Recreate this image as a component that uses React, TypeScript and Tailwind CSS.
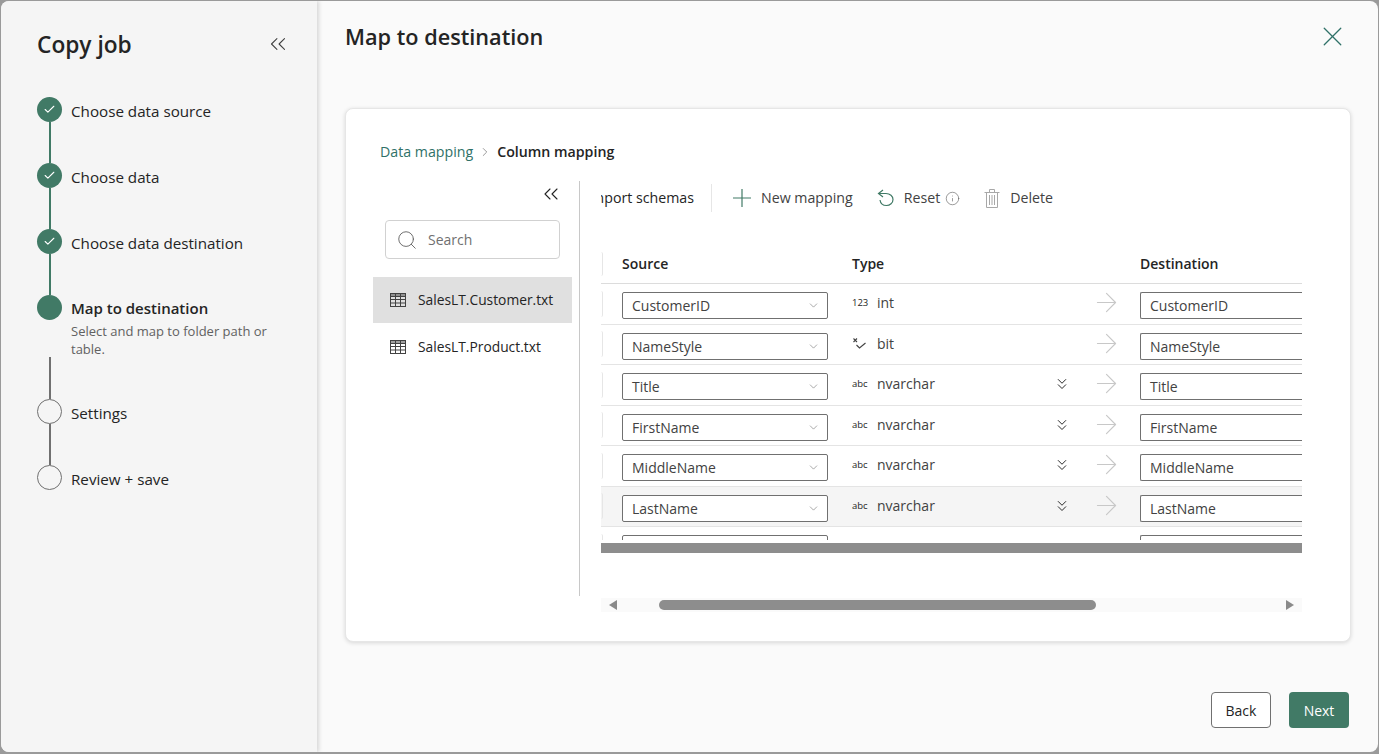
import { ArrowRight, ChevronDown, ChevronRight, ChevronsDown, ChevronsLeft, Check, Info, Search, X } from 'lucide-react';

const steps = [
  { label: 'Choose data source', state: 'done' },
  { label: 'Choose data', state: 'done' },
  { label: 'Choose data destination', state: 'done' },
  { label: 'Map to destination', state: 'active', note: 'Select and map to folder path or table.' },
  { label: 'Settings', state: 'todo' },
  { label: 'Review + save', state: 'todo' }
];

const rows = [
  { name: 'CustomerID', icon: '123', type: 'int' },
  { name: 'NameStyle', icon: 'bit', type: 'bit' },
  { name: 'Title', icon: 'abc', type: 'nvarchar' },
  { name: 'FirstName', icon: 'abc', type: 'nvarchar' },
  { name: 'MiddleName', icon: 'abc', type: 'nvarchar' },
  { name: 'LastName', icon: 'abc', type: 'nvarchar', hover: true },
  { name: '', icon: '', type: '' }
];

function TableIcon() {
  return (
    <svg width="16" height="14" viewBox="0 0 16 14" fill="none" stroke="#424242" strokeWidth="1">
      <rect x="0.5" y="0.5" width="15" height="13" />
      <path d="M0.5 3.5H15.5M0.5 6.5H15.5M0.5 10H15.5M5.5 0.5V13.5M10.5 0.5V13.5" />
      <path d="M0.5 2H15.5" />
    </svg>
  );
}

function PlusIcon() {
  return (
    <svg width="18" height="18" viewBox="0 0 18 18" fill="none" stroke="#417a66" strokeWidth="1.2">
      <path d="M9 0V18M0 9H18" />
    </svg>
  );
}

function ResetIcon() {
  return (
    <svg width="19" height="18" viewBox="0 0 19 18" fill="none" stroke="#417a66" strokeWidth="1.2">
      <path d="M6 1L1.5 4.5L6 8" />
      <path d="M1.5 4.5H9C13 4.5 16 7 16 10.5C16 14 13 16.5 9.5 16.5C6 16.5 3.5 14.5 3 11" />
    </svg>
  );
}

function TrashIcon() {
  return (
    <svg width="16" height="19" viewBox="0 0 16 19" fill="none" stroke="#a8a8a8" strokeWidth="1">
      <path d="M0.5 3.5H15.5M5.5 3.5V0.5H10.5V3.5" />
      <path d="M2.5 3.5V18.5H13.5V3.5" />
      <path d="M5.5 6V16M8 6V16M10.5 6V16" />
    </svg>
  );
}

function Step({ step, last }: { step: (typeof steps)[number]; last: boolean }) {
  const done = step.state === 'done';
  const active = step.state === 'active';
  const lineColor = done ? 'bg-[#417a66]' : 'bg-[#707070]';
  return (
    <div className={`flex gap-[9px] ${active ? 'h-[104px]' : 'h-[66px]'}`}>
      <div className="flex w-[25px] flex-col items-center">
        {step.state === 'todo' ? (
          <div className="h-[25px] w-[25px] shrink-0 rounded-full border border-[#707070]" />
        ) : (
          <div className="flex h-[25px] w-[25px] shrink-0 items-center justify-center rounded-full bg-[#417a66]">
            {done && <Check size={13} color="#fff" strokeWidth={2} />}
          </div>
        )}
        {!last && <div className={`w-[2px] flex-1 ${lineColor} ${active ? 'mt-[37px]' : ''}`} />}
      </div>
      <div className={`w-[205px] ${active ? '' : 'mt-[1px]'}`}>
        <div className={`leading-[26px] text-[#242424] ${active ? 'text-[15px] font-semibold' : 'text-[15.2px]'}`}>
          {step.label}
        </div>
        {step.note && <div className="mt-[1px] text-[13px] leading-[18px] text-[#616161]">{step.note}</div>}
      </div>
    </div>
  );
}

function TypeIcon({ kind }: { kind: string }) {
  if (kind === 'bit') {
    return (
      <svg width="15" height="14" viewBox="0 0 15 14" fill="none" stroke="#424242" strokeWidth="1.1">
        <path d="M1.5 1.5L5 5M5 1.5L1.5 5M4.5 8L7.5 11L13.5 6" />
      </svg>
    );
  }
  return <span className="w-[17px] text-[9.5px] leading-none text-[#242424]">{kind}</span>;
}

function Row({ row }: { row: (typeof rows)[number] }) {
  return (
    <div className={`grid h-[40.5px] shrink-0 grid-cols-[21px_230px_245px_43px_162px] border-b border-[#e4e4e4] ${row.hover ? 'bg-[#f5f5f5]' : ''}`}>
      <div className="flex items-center">
        <div className="h-[26px] w-[2px] rounded-r-sm border-r border-[#e6e6e6]" />
      </div>
      <div className="pt-[8px]">
        <div className="flex h-[27px] w-[206px] items-center justify-between rounded-[2px] border border-[#707070] bg-white pr-[7px] pl-[9px] text-[14px] text-[#424242]">
          {row.name}
          {row.name && <ChevronDown size={13} color="#616161" strokeWidth={1} />}
        </div>
      </div>
      <div className="flex items-start pt-[9px]">
        {row.type && (
          <>
            <div className="flex h-[20px] w-[25px] items-center"><TypeIcon kind={row.icon} /></div>
            <span className="text-[14px] leading-[20px] text-[#424242]">{row.type}</span>
            {row.type === 'nvarchar' && (
              <ChevronsDown size={18} color="#242424" strokeWidth={1.3} className="mt-[1px] ml-[118px]" />
            )}
          </>
        )}
      </div>
      <div className="pt-[3px]">
        {row.type && <ArrowRight size={31} color="#c8c8c8" strokeWidth={0.9} className="-ml-[6px]" />}
      </div>
      <div className="pt-[8px]">
        <div className="flex h-[27px] items-center rounded-l-[2px] border-y border-l border-[#707070] bg-white pl-[9px] text-[14px] text-[#424242]">
          {row.name}
        </div>
      </div>
    </div>
  );
}

export default function App() {
  return (
    <div className="h-[754px] w-[1379px] overflow-hidden bg-[#9a9a9a] pt-[1px] pr-[1px] pb-[2px] pl-[1px] font-['Open_Sans','Noto_Sans',sans-serif]">
      <div className="flex h-full overflow-hidden rounded-[8px] bg-[#fafafa]">
        <aside className="z-10 h-full w-[316px] shrink-0 bg-[#f5f5f5] pt-[27px] pl-[36px] shadow-[2px_0_4px_rgba(0,0,0,0.14)]">
          <div className="flex h-[34px] w-[250px] items-center justify-between">
            <h1 className="text-[22.7px] font-semibold text-[#242424]">Copy job</h1>
            <ChevronsLeft size={26} color="#424242" strokeWidth={1} className="-mt-[2px] -mr-[4px]" />
          </div>
          <div className="mt-[35px]">
            {steps.map((s, i) => (
              <Step key={s.label} step={s} last={i === steps.length - 1} />
            ))}
          </div>
        </aside>

        <main className="flex h-full flex-1 flex-col pr-[27px] pl-[28px]">
          <div className="flex items-center justify-between pt-[17px]">
            <h2 className="mt-[2px] text-[21.7px] leading-[34px] font-semibold text-[#242424]">Map to destination</h2>
            <X size={33} color="#2f7168" strokeWidth={0.95} className="mr-[2px]" />
          </div>

          <section className="mt-[54px] h-[534px] rounded-[8px] border border-[#e6e6e6] bg-white pt-[33px] pl-[27px] shadow-[0_1px_4px_rgba(0,0,0,0.14)]">
            <div className="flex items-center pl-[7px] text-[14.2px] leading-[20px]">
              <span className="text-[#2f7168]">Data mapping</span>
              <ChevronRight size={14} color="#707070" strokeWidth={1.2} className="mx-[5px]" />
              <span className="font-semibold text-[#242424]">Column mapping</span>
            </div>

            <div className="mt-[19px] flex h-[415px]">
              <div className="w-[207px] shrink-0 border-r border-[#c8c8c8]">
                <div className="flex h-[30px] justify-end pt-[1px] pr-[16px]">
                  <ChevronsLeft size={24} color="#242424" strokeWidth={1.1} />
                </div>
                <div className="mt-[9px] ml-[12px] flex h-[39px] w-[175px] items-center gap-[10px] rounded-[4px] border border-[#d1d1d1] pl-[10px] text-[14px] text-[#707070]">
                  <Search size={22} color="#616161" strokeWidth={1} />
                  Search
                </div>
                <div className="mt-[18px] flex h-[46px] w-[199px] items-center gap-[12px] bg-[#e0e0e0] pl-[17px] text-[13.8px] text-[#242424]">
                  <TableIcon />
                  SalesLT.Customer.txt
                </div>
                <div className="mt-[1px] flex h-[46px] w-[199px] items-center gap-[12px] pl-[17px] text-[13.8px] text-[#242424]">
                  <TableIcon />
                  SalesLT.Product.txt
                </div>
              </div>

              <div className="ml-[21px] w-[701px]">
                <div className="flex h-[34px] items-center text-[14.2px] text-[#242424]">
                  <div className="flex h-[28px] w-[111px] items-center justify-end overflow-hidden border-r border-[#e6e6e6] pr-[17px] whitespace-nowrap">
                    Import schemas
                  </div>
                  <div className="ml-[21px]"><PlusIcon /></div>
                  <span className="ml-[10px] text-[#424242]">New mapping</span>
                  <div className="ml-[24px]"><ResetIcon /></div>
                  <span className="ml-[8px] text-[#424242]">Reset</span>
                  <Info size={15} color="#616161" strokeWidth={1} className="ml-[5px]" />
                  <div className="ml-[24px]"><TrashIcon /></div>
                  <span className="ml-[10px] text-[#424242]">Delete</span>
                </div>

                <div className="mt-[29px] flex h-[40px] border-b border-[#dcdcdc] text-[14px] font-semibold text-[#242424]">
                  <div className="flex h-[39px] w-[21px] items-center">
                    <div className="h-[24px] w-[2px] rounded-r-sm border-r border-[#e6e6e6]" />
                  </div>
                  <div className="w-[230px] pt-[9px]">Source</div>
                  <div className="w-[288px] pt-[9px]">Type</div>
                  <div className="pt-[9px]">Destination</div>
                </div>
                <div className="flex h-[269px] flex-col overflow-hidden">
                  <Row row={rows[0]} />
                  <Row row={rows[1]} />
                  <Row row={rows[2]} />
                  <Row row={rows[3]} />
                  <Row row={rows[4]} />
                  <Row row={rows[5]} />
                  <div className="h-[13px] shrink-0 overflow-hidden">
                    <Row row={rows[6]} />
                  </div>
                  <div className="mt-[3px] h-[10px] shrink-0 bg-[#8d8d8d]" />
                </div>

                <div className="mt-[45px] flex h-[14px] items-center bg-[#fafafa] px-[8px]">
                  <div className="h-0 w-0 border-y-[5px] border-r-[8px] border-y-transparent border-r-[#8a8a8a]" />
                  <div className="ml-[42px] h-[10px] w-[437px] rounded-full bg-[#8d8d8d]" />
                  <div className="ml-auto h-0 w-0 border-y-[5px] border-l-[8px] border-y-transparent border-l-[#8a8a8a]" />
                </div>
              </div>
            </div>
          </section>

          <div className="mt-[50px] flex justify-end gap-[18px] pr-[2px]">
            <button className="h-[36px] w-[60px] rounded-[4px] border border-[#707070] bg-white text-[14px] text-[#242424]">Back</button>
            <button className="h-[36px] w-[60px] rounded-[4px] bg-[#417a66] text-[14px] text-white">Next</button>
          </div>
        </main>
      </div>
    </div>
  );
}
